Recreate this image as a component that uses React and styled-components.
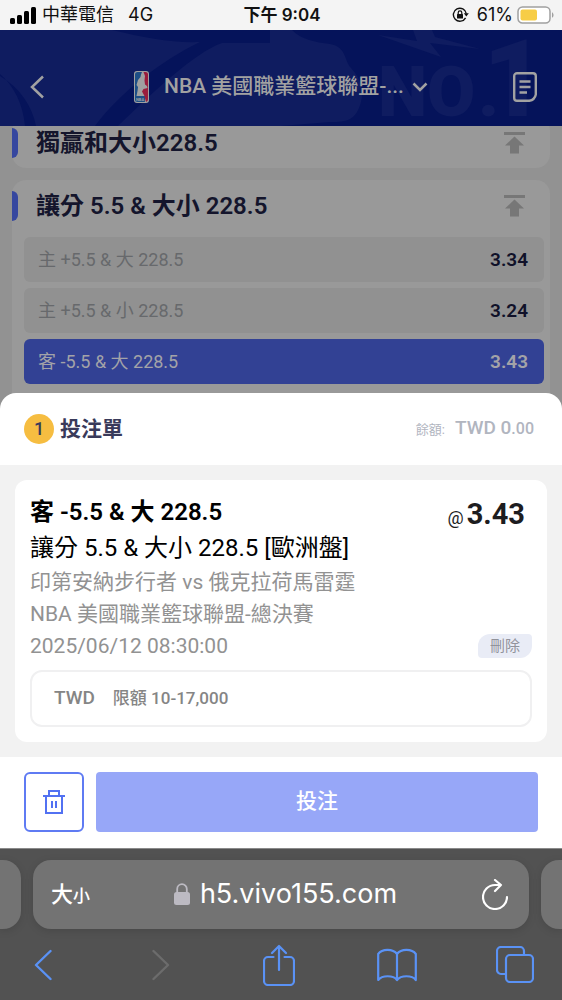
import React from "react";
import styled, { createGlobalStyle } from "styled-components";

const GlobalStyle = createGlobalStyle`
  * {
    box-sizing: border-box;
  }

  body {
    margin: 0;
    font-family: Roboto, "Noto Sans CJK TC", sans-serif;
    line-height: 1.2;
    background-color: #525252;
  }

  button,
  input {
    font-family: inherit;
    line-height: inherit;
    margin: 0;
    padding: 0;
    border: 0;
    background: none;
  }

  h1,
  h2,
  p {
    margin: 0;
  }

  svg {
    display: block;
    flex: none;
  }
`;

const Page = styled.div`
  min-height: 100vh;
  display: flex;
  flex-direction: column;
  overflow: hidden;
`;

/* status bar */

const StatusBar = styled.div`
  height: 30px;
  padding: 0 8px 0 10px;
  display: grid;
  grid-template-columns: 1fr auto 1fr;
  align-items: center;
  background-color: #f4f4f4;
  color: #111;
  font-family: Inter, "Noto Sans CJK TC", sans-serif;
  font-size: 18px;
`;

const StatusGroup = styled.div`
  display: flex;
  align-items: center;
  justify-content: ${({ $end }) => ($end ? "flex-end" : "flex-start")};
  gap: ${({ $end }) => ($end ? "4px" : "6px")};
  white-space: nowrap;
`;

const Network = styled.span`
  margin-left: 8px;
`;

const Charge = styled.span`
  margin-left: 4px;
`;

const Clock = styled.span`
  font-size: 17px;
  font-weight: 600;
`;

/* header */

const Header = styled.header`
  position: relative;
  height: 96px;
  padding: 18px 24px 0;
  display: flex;
  align-items: center;
  justify-content: space-between;
  overflow: hidden;
  background-color: #0f1c60;
  color: #a2a2a2;
`;

const HeaderArt = styled.svg`
  position: absolute;
  top: 0;
  left: 0;
  width: 100%;
  height: 100%;
`;

const IconButton = styled.button`
  position: relative;
  width: ${({ $size }) => $size || 26}px;
  height: 36px;
  display: flex;
  align-items: center;
  justify-content: center;
  color: inherit;
  cursor: pointer;
`;

const LeagueButton = styled.button`
  position: relative;
  min-width: 0;
  display: flex;
  align-items: center;
  color: inherit;
  font-size: 21px;
  font-weight: 500;
  cursor: pointer;
`;

const LeagueName = styled.span`
  margin: 0 8px 0 15px;
  white-space: nowrap;
`;

/* markets */

const Markets = styled.main`
  flex: 1;
  overflow: hidden;
  padding: 0 12px;
  background-color: #929292;
`;

const MarketList = styled.div`
  display: flex;
  flex-direction: column;
  gap: 12px;
  margin-top: -9px;
`;

const MarketCard = styled.section`
  border-radius: 14px;
  background-color: #999;

  &:last-child {
    border-radius: 14px 14px 0 0;
  }
`;

const MarketHeader = styled.div`
  height: 51px;
  padding-right: 24px;
  display: flex;
  align-items: center;
`;

const Accent = styled.span`
  width: 6px;
  height: 30px;
  border-radius: 0 6px 6px 0;
  background-color: #36479f;
`;

const MarketTitle = styled.h2`
  flex: 1;
  margin-left: 18px;
  color: #14152c;
  font-size: 24px;
  line-height: 30px;
  font-weight: 600;
`;

const Options = styled.div`
  display: flex;
  flex-direction: column;
  gap: 6px;
  padding: 6px 6px 9px 12px;
`;

const Option = styled.button`
  height: 45px;
  padding: 0 16px 0 14px;
  display: flex;
  align-items: center;
  justify-content: space-between;
  border-radius: 6px;
  background-color: ${({ $selected }) => ($selected ? "#324194" : "#919191")};
  color: ${({ $selected }) => ($selected ? "#a3a3a8" : "#67696c")};
  font-size: 18px;
  line-height: 20px;
  cursor: pointer;
`;

const Odds = styled.span`
  color: ${({ $selected }) => ($selected ? "#a3a3a8" : "#101129")};
  font-size: 19px;
  font-weight: 600;
`;

/* bet slip */

const SlipBackdrop = styled.div`
  background-color: #929292;
`;

const Slip = styled.section`
  border-radius: 16px 16px 0 0;
  background-color: #fff;
`;

const SlipHeader = styled.div`
  height: 72px;
  padding: 0 28px 0 24px;
  display: flex;
  align-items: center;
  justify-content: space-between;
`;

const SlipTitle = styled.h1`
  display: flex;
  align-items: center;
  gap: 6px;
  color: #393a5a;
  font-size: 21px;
  line-height: 24px;
  font-weight: 600;
`;

const Count = styled.span`
  width: 30px;
  height: 30px;
  display: flex;
  align-items: center;
  justify-content: center;
  border-radius: 50%;
  background-color: #f6bd41;
  color: #393a5a;
  font-size: 18px;
  font-weight: 500;
`;

const Balance = styled.p`
  display: flex;
  align-items: baseline;
  color: #b1b5bf;
  font-size: 19px;
  line-height: 24px;
  font-weight: 500;
`;

const BalanceLabel = styled.span`
  margin-right: 10px;
  font-size: 13px;
  font-weight: 400;
`;

const Cents = styled.span`
  font-size: 16px;
`;

const SlipBody = styled.div`
  padding: 15px;
  background-color: #f2f2f2;
`;

const BetCard = styled.article`
  padding: 14px 15px 15px;
  border-radius: 12px;
  background-color: #fff;
`;

const BetRow = styled.div`
  display: flex;
  align-items: center;
  justify-content: space-between;
`;

const Pick = styled.h2`
  color: #000;
  font-size: 24px;
  line-height: 36px;
  font-weight: 600;
`;

const Price = styled.span`
  display: flex;
  align-items: baseline;
  height: 36px;
  padding-right: 7px;
  color: #1d1d1f;
  font-size: 29px;
  line-height: 40px;
  font-weight: 700;
`;

const At = styled.span`
  margin-right: 3px;
  font-size: 18px;
  line-height: 20px;
  font-weight: 400;
`;

const BetMarket = styled.p`
  color: #000;
  font-size: 24px;
  line-height: 36px;
`;

const Detail = styled.p`
  color: #929292;
  font-size: 21px;
  line-height: 32px;
`;

const RemoveButton = styled.button`
  width: 54px;
  height: 24px;
  border-radius: 12px 4px 12px 4px;
  background-color: #e9ecf6;
  color: #92939b;
  font-size: 15px;
  cursor: pointer;
`;

const Stake = styled.label`
  height: 57px;
  margin-top: 8px;
  padding: 0 22px;
  display: flex;
  align-items: center;
  gap: 18px;
  border: 2px solid #f0f0f1;
  border-radius: 12px;
  color: #858585;
  font-size: 19px;
  font-weight: 500;
`;

const StakeInput = styled.input`
  flex: 1;
  min-width: 0;
  color: #858585;
  font-size: 17px;
  font-weight: 500;
  outline: none;

  &::placeholder {
    color: #858585;
    opacity: 1;
  }
`;

const SlipFooter = styled.div`
  padding: 15px 24px 16px;
  display: flex;
  gap: 12px;
`;

const ClearButton = styled.button`
  width: 60px;
  height: 60px;
  display: flex;
  align-items: center;
  justify-content: center;
  border: 2px solid #5f7bf3;
  border-radius: 6px;
  color: #5271f2;
  cursor: pointer;
`;

const BetButton = styled.button`
  flex: 1;
  height: 60px;
  border-radius: 4px;
  background-color: #97a7f8;
  color: #fff;
  font-size: 21px;
  font-weight: 500;
  cursor: pointer;
`;

/* browser chrome */

const Browser = styled.footer`
  height: 152px;
  padding-top: 11px;
  border-top: 1px solid #8a8a8a;
  background-color: #525252;
  color: #fff;
  font-family: Inter, "Noto Sans CJK TC", sans-serif;
`;

const Tabs = styled.div`
  height: 69px;
  display: flex;
  gap: 12px;
`;

const SideTab = styled.div`
  width: 21px;
  border-radius: ${({ $right }) => ($right ? "18px 0 0 18px" : "0 18px 18px 0")};
  background-color: #737373;
  box-shadow: 0 2px 8px rgba(0, 0, 0, 0.12);
`;

const AddressBar = styled.div`
  flex: 1;
  padding: 0 20px 0 18px;
  display: flex;
  align-items: center;
  justify-content: space-between;
  border-radius: 18px;
  background-color: #737373;
  box-shadow: 0 2px 8px rgba(0, 0, 0, 0.12);
`;

const TextSizeButton = styled.button`
  color: #fff;
  font-size: 22px;
  font-weight: 500;
  cursor: pointer;

  small {
    font-size: 17px;
  }
`;

const Address = styled.a`
  display: flex;
  align-items: center;
  gap: 10px;
  color: #fff;
  font-size: 27px;
  text-decoration: none;
`;

const Toolbar = styled.nav`
  height: 71px;
  padding: 0 29px 0 25px;
  display: flex;
  align-items: center;
  justify-content: space-between;
  color: #5a92f5;
`;

const SignalIcon = () => (
  <svg width="26" height="17" viewBox="0 0 26 17" fill="#000">
    <rect x="0" y="11" width="5" height="6" rx="1.5" />
    <rect x="7" y="8" width="5" height="9" rx="1.5" />
    <rect x="14" y="4" width="5" height="13" rx="1.5" />
    <rect x="21" y="0" width="5" height="17" rx="1.5" />
  </svg>
);

const RotationLockIcon = () => (
  <svg width="17" height="16" viewBox="0 0 17 16" fill="none" stroke="#111" strokeWidth="1.4">
    <path d="M13.6 10.8A6.5 6.5 0 1 1 14.3 6.7" />
    <path d="M11.8 6.2h5l-2.5 3.4z" fill="#111" stroke="none" />
    <rect x="5" y="7" width="6" height="4.6" rx="0.6" fill="#111" stroke="none" />
    <path d="M6.2 7.4V5.7a1.8 1.8 0 0 1 3.6 0v1.7" strokeWidth="1.2" />
  </svg>
);

const BatteryIcon = () => (
  <svg width="37" height="18" viewBox="0 0 37 18">
    <rect x="1" y="1" width="32" height="16" rx="4.5" fill="#fff" stroke="#a0a0a0" strokeWidth="1.5" />
    <rect x="3.500" y="3.500" width="16.500" height="11" rx="2" fill="#f7cd46" />
    <path d="M35 6.2c2 1 2 4.600 0 5.600z" fill="#a0a0a0" />
  </svg>
);

const NbaLogo = () => (
  <svg width="15" height="32" viewBox="0 0 15 32">
    <rect width="15" height="32" rx="3" fill="#a0a0a0" />
    <path d="M3.500 1H8L7 3.500 6.500 6 4 9l-1.500 5 1.500 2-.5 4L2.500 25H11v5.500a1 1 0 0 1-.5.5h-7A2.500 2.500 0 0 1 1 28.500v-25A2.500 2.500 0 0 1 3.500 1z" fill="#1d4f86" />
    <path d="M9.500 1h2A2.500 2.500 0 0 1 14 3.500v25a2.500 2.500 0 0 1-2 2.400L10.500 25 8 20.500l1.500-2.500 4-1-.5-2-2-1.500-.5-4 .5-4.500z" fill="#9a1c3c" />
    <text x="2" y="30" fontSize="4" fontWeight="700" fill="#a0a0a0">NBA</text>
  </svg>
);

const ToTopIcon = () => (
  <svg width="22" height="22" viewBox="0 0 22 22" fill="#777">
    <path d="M0 0h21v3H0zM10.500 4.500L20 13.500H15v8H6v-8H1z" />
  </svg>
);

const TrashIcon = () => (
  <svg width="24" height="26" viewBox="0 0 24 26" fill="none" stroke="currentColor" strokeWidth="2">
    <path d="M1 7h22M7 7V2h10v5M4 7v17h16V7M10 12v7M14 12v7" />
  </svg>
);

const OPTIONS = [
  { label: "主 +5.5 & 大 228.5", odds: "3.34" },
  { label: "主 +5.5 & 小 228.5", odds: "3.24" },
  { label: "客 -5.5 & 大 228.5", odds: "3.43", selected: true }
];

const Market = ({ title, children }) => (
  <MarketCard>
    <MarketHeader>
      <Accent />
      <MarketTitle>{title}</MarketTitle>
      <IconButton $size={22} aria-label="Top">
        <ToTopIcon />
      </IconButton>
    </MarketHeader>
    {children}
  </MarketCard>
);

const App = () => (
  <Page>
    <GlobalStyle />
    <StatusBar>
      <StatusGroup>
        <SignalIcon />
        <span>中華電信</span>
        <Network>4G</Network>
      </StatusGroup>
      <Clock>下午 9:04</Clock>
      <StatusGroup $end>
        <RotationLockIcon />
        <Charge>61%</Charge>
        <BatteryIcon />
      </StatusGroup>
    </StatusBar>

    <Header>
      <HeaderArt viewBox="0 0 562 96" preserveAspectRatio="xMidYMid slice" aria-hidden="true">
        <path d="M112 0C145 8 172 13 200 12C160 31 118 65 95 96H118C150 65 195 22 222 13H270V0zM0 44C14 56 23 74 25 96H36C32 76 20 58 0 46z" fill="#05135a" />
        <path d="M292 0C302 10 315 12 330 14C347 17 344 31 351 38C360 48 364 58 361 72C356 90 348 92 330 92L281 96H562V0z" fill="#05135a" />
        <path d="M378 5L417 11L413 0H432L435 7L480 19L430 13L441 27z" fill="#0f1c60" />
        <g fill="#0f1c60" fontWeight="900" fontFamily="Roboto, sans-serif">
          <text x="378 427 478" y="86" fontSize="70">NO.</text>
          <text x="483" y="86" fontSize="107">1</text>
        </g>
      </HeaderArt>
      <IconButton aria-label="Back">
        <svg width="16" height="24" viewBox="0 0 16 24" fill="none" stroke="currentColor" strokeWidth="2.500">
          <path d="M14 1.500L3 12 14 22.500" />
        </svg>
      </IconButton>
      <LeagueButton>
        <NbaLogo />
        <LeagueName>NBA 美國職業籃球聯盟-...</LeagueName>
        <svg width="16" height="10" viewBox="0 0 16 10" fill="none" stroke="currentColor" strokeWidth="2.500">
          <path d="M1.500 1.500L8 8l6.500-6.500" />
        </svg>
      </LeagueButton>
      <IconButton aria-label="Bets">
        <svg width="24" height="30" viewBox="0 0 24 30" fill="none" stroke="currentColor" strokeWidth="2.400">
          <path d="M4 1.200h16a2.800 2.800 0 0 1 2.800 2.800v18.500q-1 5.300-6.500 6.300H4A2.800 2.800 0 0 1 1.200 26V4A2.800 2.800 0 0 1 4 1.200zM6.500 9.500h11M6.500 15h11M6.500 20.500h7.500" />
        </svg>
      </IconButton>
    </Header>

    <Markets>
      <MarketList>
        <Market title="獨贏和大小228.5" />
        <Market title="讓分 5.5 & 大小 228.5">
          <Options>
            {OPTIONS.map(({ label, odds, selected }) => (
              <Option key={label} $selected={selected}>
                <span>{label}</span>
                <Odds $selected={selected}>{odds}</Odds>
              </Option>
            ))}
          </Options>
        </Market>
      </MarketList>
    </Markets>

    <SlipBackdrop>
      <Slip>
        <SlipHeader>
          <SlipTitle>
            <Count>1</Count>
            投注單
          </SlipTitle>
          <Balance>
            <BalanceLabel>餘額:</BalanceLabel>
            TWD 0<Cents>.00</Cents>
          </Balance>
        </SlipHeader>
        <SlipBody>
          <BetCard>
            <BetRow>
              <Pick>客 -5.5 & 大 228.5</Pick>
              <Price>
                <At>@</At>3.43
              </Price>
            </BetRow>
            <BetMarket>讓分 5.5 & 大小 228.5 [歐洲盤]</BetMarket>
            <Detail>印第安納步行者 vs 俄克拉荷馬雷霆</Detail>
            <Detail>NBA 美國職業籃球聯盟-總決賽</Detail>
            <BetRow>
              <Detail>2025/06/12 08:30:00</Detail>
              <RemoveButton>刪除</RemoveButton>
            </BetRow>
            <Stake>
              TWD
              <StakeInput placeholder="限額 10-17,000" inputMode="decimal" />
            </Stake>
          </BetCard>
        </SlipBody>
        <SlipFooter>
          <ClearButton aria-label="Clear">
            <TrashIcon />
          </ClearButton>
          <BetButton>投注</BetButton>
        </SlipFooter>
      </Slip>
    </SlipBackdrop>

    <Browser>
      <Tabs>
        <SideTab />
        <AddressBar>
          <TextSizeButton>
            大<small>小</small>
          </TextSizeButton>
          <Address href="#">
            <svg width="16" height="22" viewBox="0 0 16 22">
              <rect x="0" y="9" width="16" height="13" rx="2.500" fill="#bcbac2" />
              <path d="M3.200 10V6a4.800 4.800 0 0 1 9.600 0v4" fill="none" stroke="#bcbac2" strokeWidth="1.800" />
            </svg>
            h5.vivo155.com
          </Address>
          <IconButton $size={28} aria-label="Reload">
            <svg width="26" height="31" viewBox="0 0 26 31" fill="none" stroke="#fff" strokeWidth="2.200" strokeLinecap="round" strokeLinejoin="round">
              <path d="M25 18a12 12 0 1 1-12-12h6M13 1l6 5-6 6" />
            </svg>
          </IconButton>
        </AddressBar>
        <SideTab $right />
      </Tabs>
      <Toolbar>
        <IconButton $size={36} aria-label="Previous page">
          <svg width="18" height="32" viewBox="0 0 18 32" fill="none" stroke="currentColor" strokeWidth="2.400" strokeLinecap="round" strokeLinejoin="round">
            <path d="M16.500 2L2 16l14.500 14" />
          </svg>
        </IconButton>
        <IconButton $size={36} aria-label="Next page" disabled>
          <svg width="18" height="32" viewBox="0 0 18 32" fill="none" stroke="#6c6c6c" strokeWidth="2.400" strokeLinecap="round" strokeLinejoin="round">
            <path d="M1.500 2L16 16 1.500 30" />
          </svg>
        </IconButton>
        <IconButton $size={36} aria-label="Share">
          <svg width="32" height="42" viewBox="0 0 32 42" fill="none" stroke="currentColor" strokeWidth="2.200" strokeLinecap="round" strokeLinejoin="round">
            <path d="M10.500 13H5a4 4 0 0 0-4 4v20a4 4 0 0 0 4 4h22a4 4 0 0 0 4-4V17a4 4 0 0 0-4-4h-5.500M16 26V2M9 9l7-7 7 7" />
          </svg>
        </IconButton>
        <IconButton $size={36} aria-label="Bookmarks">
          <svg width="40" height="34" viewBox="0 0 40 34" fill="none" stroke="currentColor" strokeWidth="2.200" strokeLinejoin="round">
            <path d="M20 6C16 0.500 5 0.500 1.200 6v26c4-5 15-5 18.800 0 4-5 15-5 18.800 0V6C35 0.500 24 0.500 20 6zM20 6v26" />
          </svg>
        </IconButton>
        <IconButton $size={36} aria-label="Tabs">
          <svg width="38" height="37" viewBox="0 0 38 37" fill="none" stroke="currentColor" strokeWidth="2.200">
            <rect x="10" y="9" width="27" height="27" rx="4" />
            <path d="M10 28H5a4 4 0 0 1-4-4V5a4 4 0 0 1 4-4h19a4 4 0 0 1 4 4v4" />
          </svg>
        </IconButton>
      </Toolbar>
    </Browser>
  </Page>
);

export default App;
